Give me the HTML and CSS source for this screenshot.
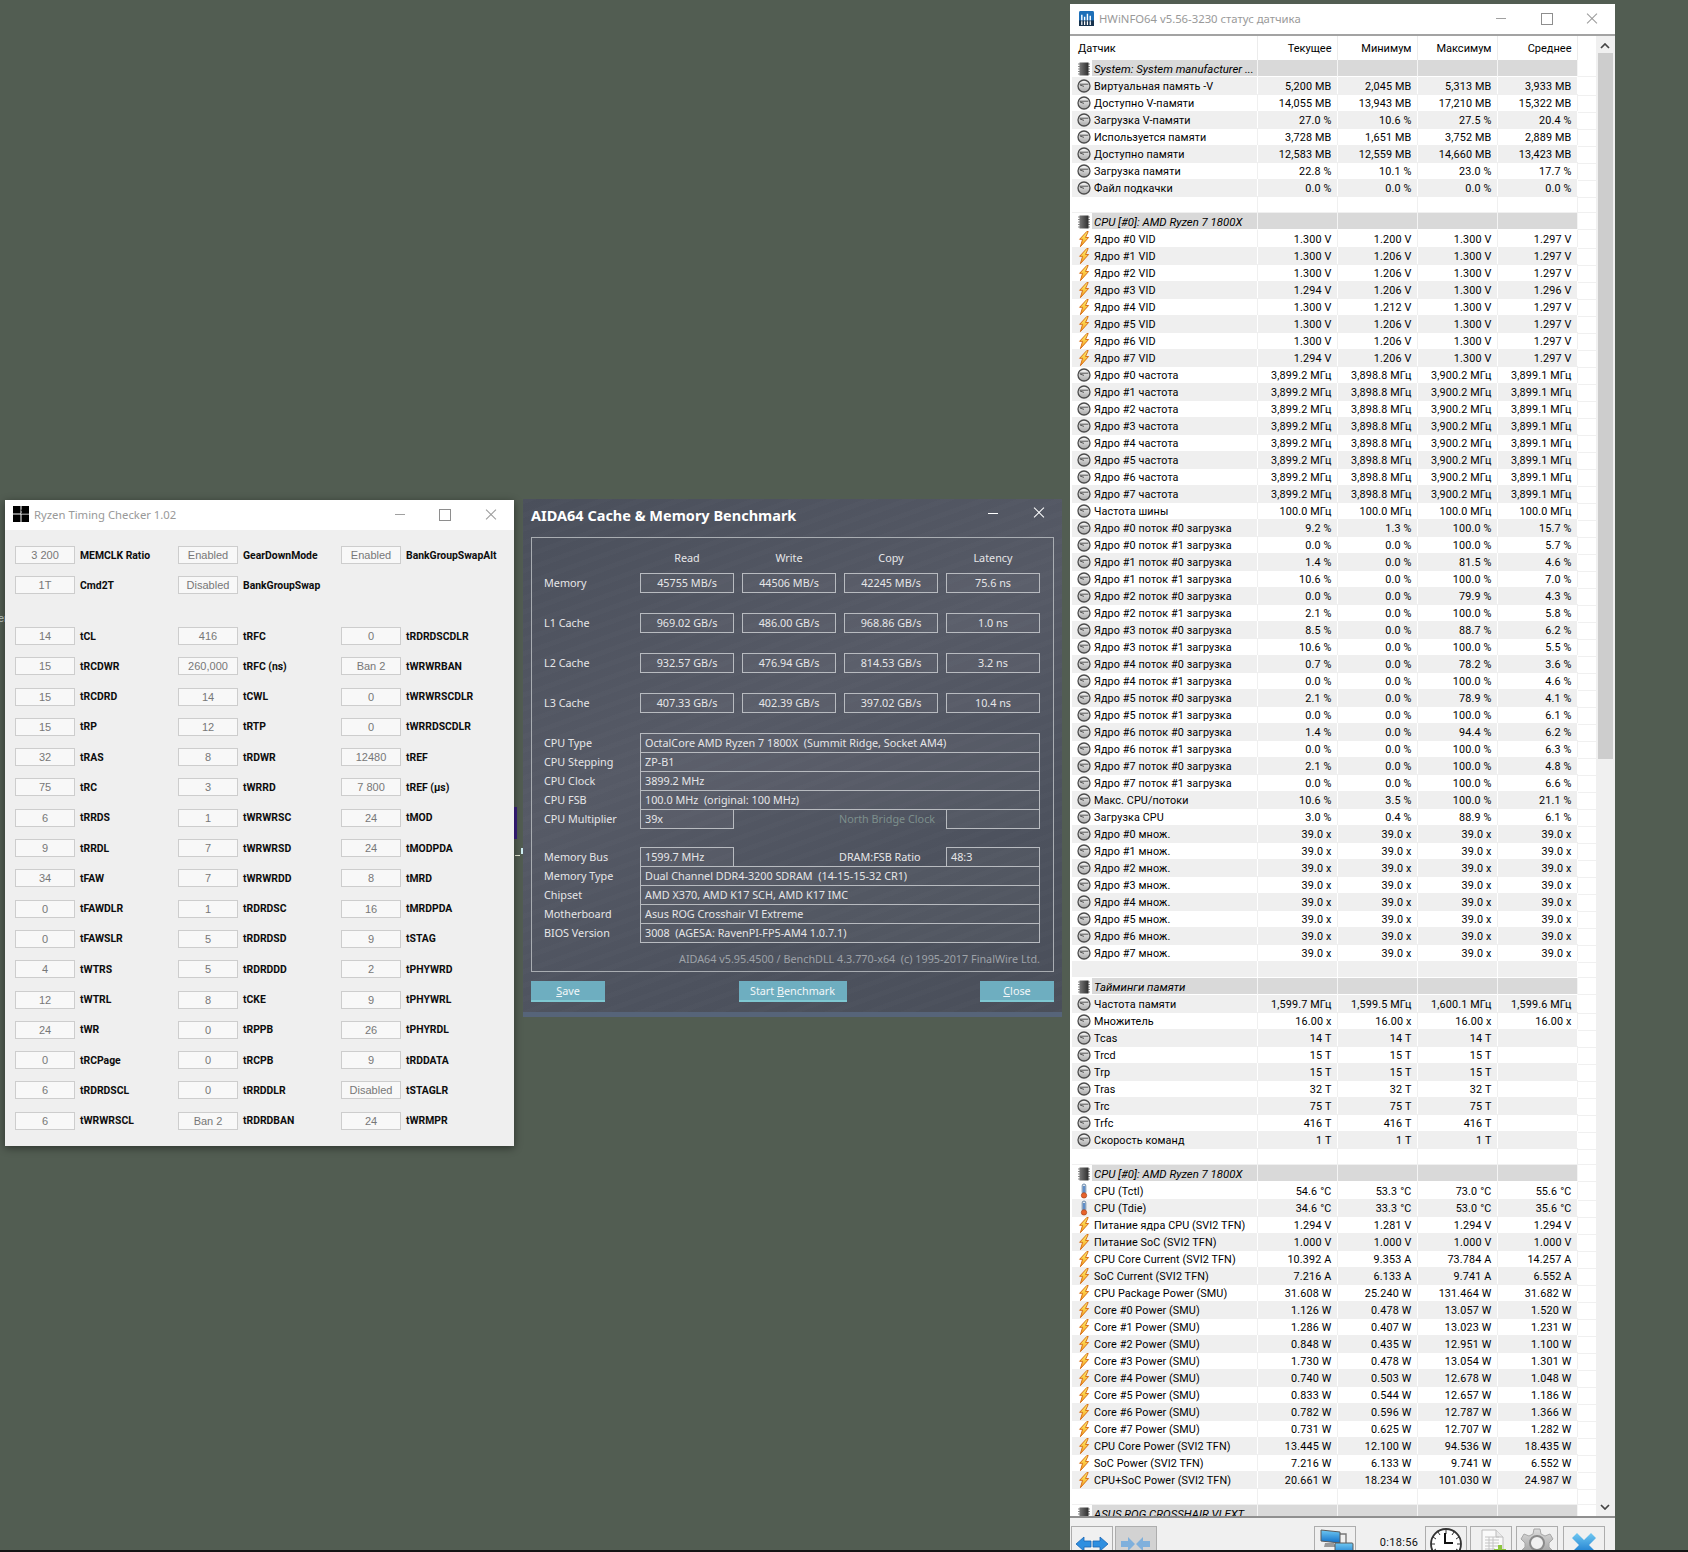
FILE: index.html
```html
<!DOCTYPE html>
<html lang="ru">
<head>
<meta charset="utf-8">
<title>Desktop</title>
<link rel="stylesheet" href="styles.css">
</head>
<body>
<svg class="sprite" width="0" height="0" aria-hidden="true">
<defs>
<linearGradient id="gc" x1="0" y1="0" x2="0" y2="1"><stop offset="0" stop-color="#fafafa"/><stop offset="1" stop-color="#a8a8a8"/></linearGradient>
<linearGradient id="gb" x1="0" y1="0" x2="0" y2="1"><stop offset="0" stop-color="#fff06a"/><stop offset="1" stop-color="#f4a21e"/></linearGradient>
<linearGradient id="gp" x1="0" y1="0" x2="1" y2="0"><stop offset="0" stop-color="#777"/><stop offset="1" stop-color="#2e2e2e"/></linearGradient>
<linearGradient id="gn" x1="0" y1="0" x2="0" y2="1"><stop offset="0" stop-color="#6fc8f2"/><stop offset="1" stop-color="#0f6fc8"/></linearGradient>
<linearGradient id="gs" x1="0" y1="0" x2="0" y2="1"><stop offset="0" stop-color="#dcdcdc"/><stop offset="1" stop-color="#8f8f8f"/></linearGradient>
<symbol id="c" viewBox="0 0 16 16"><circle cx="8" cy="8" r="6" fill="url(#gc)" stroke="#4c4c4c" stroke-width="1.3"/><path d="M3.6 6.200h8.800M8 8.400 3.900 7" fill="none" stroke="#555" stroke-width="1"/></symbol>
<symbol id="b" viewBox="0 0 16 16"><path d="M10.800.5 3.600 8.300h3L4.400 15.700l8.200-9.200H9.500l2.700-6z" fill="url(#gb)" stroke="#d8701a" stroke-width="1" stroke-linejoin="round"/></symbol>
<symbol id="p" viewBox="0 0 16 16"><path d="M2 3h2M2 5.500h2M2 8h2M2 10.500h2M2 13h2M12 3h2M12 5.500h2M12 8h2M12 10.500h2M12 13h2" stroke="#8a8a8a" stroke-width="1"/><rect x="3.500" y="1.500" width="9" height="13" fill="url(#gp)"/></symbol>
<symbol id="t" viewBox="0 0 16 16"><rect x="6.200" y="1" width="3.600" height="10" rx="1.800" fill="#dfe7ef" stroke="#5b7da0" stroke-width=".9"/><path d="M8 3v8" stroke="#3f78c0" stroke-width="1.600"/><circle cx="8" cy="12.400" r="2.700" fill="#e8622a" stroke="#a8481e" stroke-width=".7"/></symbol>
</defs>
</svg>

<span class="stray stray-text">er</span>
<span class="stray stray-purple"></span>
<span class="stray stray-dash"></span>
<span class="stray stray-tick"></span>

<section class="win rtc">
<header class="rtc-title">
<svg class="rtc-logo" viewBox="0 0 16 16"><path d="M0 0h7.500v7.500H0zM8.500 0H16v7.500H8.500zM0 8.500h7.500V16H0zM8.500 8.500H16V16H8.500z" fill="#000"/><path d="M7.500 4h2v1M8 7.500h8" stroke="#000" stroke-width=".5"/></svg>
<span class="rtc-name">Ryzen Timing Checker 1.02</span>
<span class="ctl ctl-min"></span><span class="ctl ctl-max"></span><span class="ctl ctl-close"></span>
</header>
<div class="rtc-top">
<div class="t"><span>3 200</span><b>MEMCLK Ratio</b></div><div class="t"><span>Enabled</span><b>GearDownMode</b></div><div class="t"><span>Enabled</span><b>BankGroupSwapAlt</b></div>
<div class="t"><span>1T</span><b>Cmd2T</b></div><div class="t"><span>Disabled</span><b>BankGroupSwap</b></div><div></div>
</div>
<div class="rtc-main">
<div class="t"><span>14</span><b>tCL</b></div><div class="t"><span>416</span><b>tRFC</b></div><div class="t"><span>0</span><b>tRDRDSCDLR</b></div>
<div class="t"><span>15</span><b>tRCDWR</b></div><div class="t"><span>260,000</span><b>tRFC (ns)</b></div><div class="t"><span>Ban 2</span><b>tWRWRBAN</b></div>
<div class="t"><span>15</span><b>tRCDRD</b></div><div class="t"><span>14</span><b>tCWL</b></div><div class="t"><span>0</span><b>tWRWRSCDLR</b></div>
<div class="t"><span>15</span><b>tRP</b></div><div class="t"><span>12</span><b>tRTP</b></div><div class="t"><span>0</span><b>tWRRDSCDLR</b></div>
<div class="t"><span>32</span><b>tRAS</b></div><div class="t"><span>8</span><b>tRDWR</b></div><div class="t"><span>12480</span><b>tREF</b></div>
<div class="t"><span>75</span><b>tRC</b></div><div class="t"><span>3</span><b>tWRRD</b></div><div class="t"><span>7 800</span><b>tREF (µs)</b></div>
<div class="t"><span>6</span><b>tRRDS</b></div><div class="t"><span>1</span><b>tWRWRSC</b></div><div class="t"><span>24</span><b>tMOD</b></div>
<div class="t"><span>9</span><b>tRRDL</b></div><div class="t"><span>7</span><b>tWRWRSD</b></div><div class="t"><span>24</span><b>tMODPDA</b></div>
<div class="t"><span>34</span><b>tFAW</b></div><div class="t"><span>7</span><b>tWRWRDD</b></div><div class="t"><span>8</span><b>tMRD</b></div>
<div class="t"><span>0</span><b>tFAWDLR</b></div><div class="t"><span>1</span><b>tRDRDSC</b></div><div class="t"><span>16</span><b>tMRDPDA</b></div>
<div class="t"><span>0</span><b>tFAWSLR</b></div><div class="t"><span>5</span><b>tRDRDSD</b></div><div class="t"><span>9</span><b>tSTAG</b></div>
<div class="t"><span>4</span><b>tWTRS</b></div><div class="t"><span>5</span><b>tRDRDDD</b></div><div class="t"><span>2</span><b>tPHYWRD</b></div>
<div class="t"><span>12</span><b>tWTRL</b></div><div class="t"><span>8</span><b>tCKE</b></div><div class="t"><span>9</span><b>tPHYWRL</b></div>
<div class="t"><span>24</span><b>tWR</b></div><div class="t"><span>0</span><b>tRPPB</b></div><div class="t"><span>26</span><b>tPHYRDL</b></div>
<div class="t"><span>0</span><b>tRCPage</b></div><div class="t"><span>0</span><b>tRCPB</b></div><div class="t"><span>9</span><b>tRDDATA</b></div>
<div class="t"><span>6</span><b>tRDRDSCL</b></div><div class="t"><span>0</span><b>tRRDDLR</b></div><div class="t"><span>Disabled</span><b>tSTAGLR</b></div>
<div class="t"><span>6</span><b>tWRWRSCL</b></div><div class="t"><span>Ban 2</span><b>tRDRDBAN</b></div><div class="t"><span>24</span><b>tWRMPR</b></div>
</div>
</section>

<section class="win aida">
<header class="aida-title">
<h1>AIDA64 Cache &amp; Memory Benchmark</h1>
<span class="actl actl-min"></span><span class="actl actl-close"></span>
</header>
<div class="aida-frame">
<div class="bench bench-head"><span></span><span>Read</span><span>Write</span><span>Copy</span><span>Latency</span></div>
<div class="bench"><label>Memory</label><output>45755 MB/s</output><output>44506 MB/s</output><output>42245 MB/s</output><output>75.6 ns</output></div>
<div class="bench"><label>L1 Cache</label><output>969.02 GB/s</output><output>486.00 GB/s</output><output>968.86 GB/s</output><output>1.0 ns</output></div>
<div class="bench"><label>L2 Cache</label><output>932.57 GB/s</output><output>476.94 GB/s</output><output>814.53 GB/s</output><output>3.2 ns</output></div>
<div class="bench"><label>L3 Cache</label><output>407.33 GB/s</output><output>402.39 GB/s</output><output>397.02 GB/s</output><output>10.4 ns</output></div>
<div class="info">
<div class="irow"><label>CPU Type</label><div class="f wide">OctalCore AMD Ryzen 7 1800X  (Summit Ridge, Socket AM4)</div></div>
<div class="irow"><label>CPU Stepping</label><div class="f wide">ZP-B1</div></div>
<div class="irow"><label>CPU Clock</label><div class="f wide">3899.2 MHz</div></div>
<div class="irow"><label>CPU FSB</label><div class="f wide">100.0 MHz  (original: 100 MHz)</div></div>
<div class="irow"><label>CPU Multiplier</label><div class="f">39x</div><span class="mid mid-off">North Bridge Clock</span><div class="f"></div></div>
</div>
<div class="info info-b">
<div class="irow"><label>Memory Bus</label><div class="f">1599.7 MHz</div><span class="mid">DRAM:FSB Ratio</span><div class="f">48:3</div></div>
<div class="irow"><label>Memory Type</label><div class="f wide">Dual Channel DDR4-3200 SDRAM  (14-15-15-32 CR1)</div></div>
<div class="irow"><label>Chipset</label><div class="f wide">AMD X370, AMD K17 SCH, AMD K17 IMC</div></div>
<div class="irow"><label>Motherboard</label><div class="f wide">Asus ROG Crosshair VI Extreme</div></div>
<div class="irow"><label>BIOS Version</label><div class="f wide">3008  (AGESA: RavenPI-FP5-AM4 1.0.7.1)</div></div>
</div>
<p class="aida-foot">AIDA64 v5.95.4500 / BenchDLL 4.3.770-x64  (c) 1995-2017 FinalWire Ltd.</p>
</div>
<div class="aida-btns">
<button class="btn btn-side"><u>S</u>ave</button>
<button class="btn btn-start">Start <u>B</u>enchmark</button>
<button class="btn btn-side"><u>C</u>lose</button>
</div>
<div class="aida-band"></div>
</section>

<section class="win hw">
<header class="hw-title">
<svg class="hw-logo" viewBox="0 0 16 16"><rect width="16" height="16" rx="1.500" fill="#1d6fb8"/><rect y="10" width="16" height="6" fill="#17324d"/><path d="M3 4v6M6 6v4M9 3v7M12 5v5" stroke="#fff" stroke-width="1.500"/><path d="M3 11v4M6 11v4M9 11v4M12 11v4" stroke="#fff" stroke-width="1.300"/></svg>
<span class="hw-name">HWiNFO64 v5.56-3230 статус датчика</span>
<span class="ctl ctl-min"></span><span class="ctl ctl-max"></span><span class="ctl ctl-close"></span>
</header>
<div class="hw-main">
<div class="list">
<div class="list-head"><span>Датчик</span><span>Текущее</span><span>Минимум</span><span>Максимум</span><span>Среднее</span></div>
<div class="rows">
<div class="row grp"><span><svg class="ic"><use href="#p"/></svg><em>System: System manufacturer ...</em></span><span></span><span></span><span></span><span></span></div>
<div class="row"><span><svg class="ic"><use href="#c"/></svg>Виртуальная память -V</span><span>5,200 MB</span><span>2,045 MB</span><span>5,313 MB</span><span>3,933 MB</span></div>
<div class="row"><span><svg class="ic"><use href="#c"/></svg>Доступно V-памяти</span><span>14,055 MB</span><span>13,943 MB</span><span>17,210 MB</span><span>15,322 MB</span></div>
<div class="row"><span><svg class="ic"><use href="#c"/></svg>Загрузка V-памяти</span><span>27.0 %</span><span>10.6 %</span><span>27.5 %</span><span>20.4 %</span></div>
<div class="row"><span><svg class="ic"><use href="#c"/></svg>Используется памяти</span><span>3,728 MB</span><span>1,651 MB</span><span>3,752 MB</span><span>2,889 MB</span></div>
<div class="row"><span><svg class="ic"><use href="#c"/></svg>Доступно памяти</span><span>12,583 MB</span><span>12,559 MB</span><span>14,660 MB</span><span>13,423 MB</span></div>
<div class="row"><span><svg class="ic"><use href="#c"/></svg>Загрузка памяти</span><span>22.8 %</span><span>10.1 %</span><span>23.0 %</span><span>17.7 %</span></div>
<div class="row"><span><svg class="ic"><use href="#c"/></svg>Файл подкачки</span><span>0.0 %</span><span>0.0 %</span><span>0.0 %</span><span>0.0 %</span></div>
<div class="row"><span></span><span></span><span></span><span></span><span></span></div>
<div class="row grp"><span><svg class="ic"><use href="#p"/></svg><em>CPU [#0]: AMD Ryzen 7 1800X</em></span><span></span><span></span><span></span><span></span></div>
<div class="row"><span><svg class="ic"><use href="#b"/></svg>Ядро #0 VID</span><span>1.300 V</span><span>1.200 V</span><span>1.300 V</span><span>1.297 V</span></div>
<div class="row"><span><svg class="ic"><use href="#b"/></svg>Ядро #1 VID</span><span>1.300 V</span><span>1.206 V</span><span>1.300 V</span><span>1.297 V</span></div>
<div class="row"><span><svg class="ic"><use href="#b"/></svg>Ядро #2 VID</span><span>1.300 V</span><span>1.206 V</span><span>1.300 V</span><span>1.297 V</span></div>
<div class="row"><span><svg class="ic"><use href="#b"/></svg>Ядро #3 VID</span><span>1.294 V</span><span>1.206 V</span><span>1.300 V</span><span>1.296 V</span></div>
<div class="row"><span><svg class="ic"><use href="#b"/></svg>Ядро #4 VID</span><span>1.300 V</span><span>1.212 V</span><span>1.300 V</span><span>1.297 V</span></div>
<div class="row"><span><svg class="ic"><use href="#b"/></svg>Ядро #5 VID</span><span>1.300 V</span><span>1.206 V</span><span>1.300 V</span><span>1.297 V</span></div>
<div class="row"><span><svg class="ic"><use href="#b"/></svg>Ядро #6 VID</span><span>1.300 V</span><span>1.206 V</span><span>1.300 V</span><span>1.297 V</span></div>
<div class="row"><span><svg class="ic"><use href="#b"/></svg>Ядро #7 VID</span><span>1.294 V</span><span>1.206 V</span><span>1.300 V</span><span>1.297 V</span></div>
<div class="row"><span><svg class="ic"><use href="#c"/></svg>Ядро #0 частота</span><span>3,899.2 МГц</span><span>3,898.8 МГц</span><span>3,900.2 МГц</span><span>3,899.1 МГц</span></div>
<div class="row"><span><svg class="ic"><use href="#c"/></svg>Ядро #1 частота</span><span>3,899.2 МГц</span><span>3,898.8 МГц</span><span>3,900.2 МГц</span><span>3,899.1 МГц</span></div>
<div class="row"><span><svg class="ic"><use href="#c"/></svg>Ядро #2 частота</span><span>3,899.2 МГц</span><span>3,898.8 МГц</span><span>3,900.2 МГц</span><span>3,899.1 МГц</span></div>
<div class="row"><span><svg class="ic"><use href="#c"/></svg>Ядро #3 частота</span><span>3,899.2 МГц</span><span>3,898.8 МГц</span><span>3,900.2 МГц</span><span>3,899.1 МГц</span></div>
<div class="row"><span><svg class="ic"><use href="#c"/></svg>Ядро #4 частота</span><span>3,899.2 МГц</span><span>3,898.8 МГц</span><span>3,900.2 МГц</span><span>3,899.1 МГц</span></div>
<div class="row"><span><svg class="ic"><use href="#c"/></svg>Ядро #5 частота</span><span>3,899.2 МГц</span><span>3,898.8 МГц</span><span>3,900.2 МГц</span><span>3,899.1 МГц</span></div>
<div class="row"><span><svg class="ic"><use href="#c"/></svg>Ядро #6 частота</span><span>3,899.2 МГц</span><span>3,898.8 МГц</span><span>3,900.2 МГц</span><span>3,899.1 МГц</span></div>
<div class="row"><span><svg class="ic"><use href="#c"/></svg>Ядро #7 частота</span><span>3,899.2 МГц</span><span>3,898.8 МГц</span><span>3,900.2 МГц</span><span>3,899.1 МГц</span></div>
<div class="row"><span><svg class="ic"><use href="#c"/></svg>Частота шины</span><span>100.0 МГц</span><span>100.0 МГц</span><span>100.0 МГц</span><span>100.0 МГц</span></div>
<div class="row"><span><svg class="ic"><use href="#c"/></svg>Ядро #0 поток #0 загрузка</span><span>9.2 %</span><span>1.3 %</span><span>100.0 %</span><span>15.7 %</span></div>
<div class="row"><span><svg class="ic"><use href="#c"/></svg>Ядро #0 поток #1 загрузка</span><span>0.0 %</span><span>0.0 %</span><span>100.0 %</span><span>5.7 %</span></div>
<div class="row"><span><svg class="ic"><use href="#c"/></svg>Ядро #1 поток #0 загрузка</span><span>1.4 %</span><span>0.0 %</span><span>81.5 %</span><span>4.6 %</span></div>
<div class="row"><span><svg class="ic"><use href="#c"/></svg>Ядро #1 поток #1 загрузка</span><span>10.6 %</span><span>0.0 %</span><span>100.0 %</span><span>7.0 %</span></div>
<div class="row"><span><svg class="ic"><use href="#c"/></svg>Ядро #2 поток #0 загрузка</span><span>0.0 %</span><span>0.0 %</span><span>79.9 %</span><span>4.3 %</span></div>
<div class="row"><span><svg class="ic"><use href="#c"/></svg>Ядро #2 поток #1 загрузка</span><span>2.1 %</span><span>0.0 %</span><span>100.0 %</span><span>5.8 %</span></div>
<div class="row"><span><svg class="ic"><use href="#c"/></svg>Ядро #3 поток #0 загрузка</span><span>8.5 %</span><span>0.0 %</span><span>88.7 %</span><span>6.2 %</span></div>
<div class="row"><span><svg class="ic"><use href="#c"/></svg>Ядро #3 поток #1 загрузка</span><span>10.6 %</span><span>0.0 %</span><span>100.0 %</span><span>5.5 %</span></div>
<div class="row"><span><svg class="ic"><use href="#c"/></svg>Ядро #4 поток #0 загрузка</span><span>0.7 %</span><span>0.0 %</span><span>78.2 %</span><span>3.6 %</span></div>
<div class="row"><span><svg class="ic"><use href="#c"/></svg>Ядро #4 поток #1 загрузка</span><span>0.0 %</span><span>0.0 %</span><span>100.0 %</span><span>4.6 %</span></div>
<div class="row"><span><svg class="ic"><use href="#c"/></svg>Ядро #5 поток #0 загрузка</span><span>2.1 %</span><span>0.0 %</span><span>78.9 %</span><span>4.1 %</span></div>
<div class="row"><span><svg class="ic"><use href="#c"/></svg>Ядро #5 поток #1 загрузка</span><span>0.0 %</span><span>0.0 %</span><span>100.0 %</span><span>6.1 %</span></div>
<div class="row"><span><svg class="ic"><use href="#c"/></svg>Ядро #6 поток #0 загрузка</span><span>1.4 %</span><span>0.0 %</span><span>94.4 %</span><span>6.2 %</span></div>
<div class="row"><span><svg class="ic"><use href="#c"/></svg>Ядро #6 поток #1 загрузка</span><span>0.0 %</span><span>0.0 %</span><span>100.0 %</span><span>6.3 %</span></div>
<div class="row"><span><svg class="ic"><use href="#c"/></svg>Ядро #7 поток #0 загрузка</span><span>2.1 %</span><span>0.0 %</span><span>100.0 %</span><span>4.8 %</span></div>
<div class="row"><span><svg class="ic"><use href="#c"/></svg>Ядро #7 поток #1 загрузка</span><span>0.0 %</span><span>0.0 %</span><span>100.0 %</span><span>6.6 %</span></div>
<div class="row"><span><svg class="ic"><use href="#c"/></svg>Макс. CPU/потоки</span><span>10.6 %</span><span>3.5 %</span><span>100.0 %</span><span>21.1 %</span></div>
<div class="row"><span><svg class="ic"><use href="#c"/></svg>Загрузка CPU</span><span>3.0 %</span><span>0.4 %</span><span>88.9 %</span><span>6.1 %</span></div>
<div class="row"><span><svg class="ic"><use href="#c"/></svg>Ядро #0 множ.</span><span>39.0 x</span><span>39.0 x</span><span>39.0 x</span><span>39.0 x</span></div>
<div class="row"><span><svg class="ic"><use href="#c"/></svg>Ядро #1 множ.</span><span>39.0 x</span><span>39.0 x</span><span>39.0 x</span><span>39.0 x</span></div>
<div class="row"><span><svg class="ic"><use href="#c"/></svg>Ядро #2 множ.</span><span>39.0 x</span><span>39.0 x</span><span>39.0 x</span><span>39.0 x</span></div>
<div class="row"><span><svg class="ic"><use href="#c"/></svg>Ядро #3 множ.</span><span>39.0 x</span><span>39.0 x</span><span>39.0 x</span><span>39.0 x</span></div>
<div class="row"><span><svg class="ic"><use href="#c"/></svg>Ядро #4 множ.</span><span>39.0 x</span><span>39.0 x</span><span>39.0 x</span><span>39.0 x</span></div>
<div class="row"><span><svg class="ic"><use href="#c"/></svg>Ядро #5 множ.</span><span>39.0 x</span><span>39.0 x</span><span>39.0 x</span><span>39.0 x</span></div>
<div class="row"><span><svg class="ic"><use href="#c"/></svg>Ядро #6 множ.</span><span>39.0 x</span><span>39.0 x</span><span>39.0 x</span><span>39.0 x</span></div>
<div class="row"><span><svg class="ic"><use href="#c"/></svg>Ядро #7 множ.</span><span>39.0 x</span><span>39.0 x</span><span>39.0 x</span><span>39.0 x</span></div>
<div class="row"><span></span><span></span><span></span><span></span><span></span></div>
<div class="row grp"><span><svg class="ic"><use href="#p"/></svg><em>Тайминги памяти</em></span><span></span><span></span><span></span><span></span></div>
<div class="row"><span><svg class="ic"><use href="#c"/></svg>Частота памяти</span><span>1,599.7 МГц</span><span>1,599.5 МГц</span><span>1,600.1 МГц</span><span>1,599.6 МГц</span></div>
<div class="row"><span><svg class="ic"><use href="#c"/></svg>Множитель</span><span>16.00 x</span><span>16.00 x</span><span>16.00 x</span><span>16.00 x</span></div>
<div class="row"><span><svg class="ic"><use href="#c"/></svg>Tcas</span><span>14 T</span><span>14 T</span><span>14 T</span><span></span></div>
<div class="row"><span><svg class="ic"><use href="#c"/></svg>Trcd</span><span>15 T</span><span>15 T</span><span>15 T</span><span></span></div>
<div class="row"><span><svg class="ic"><use href="#c"/></svg>Trp</span><span>15 T</span><span>15 T</span><span>15 T</span><span></span></div>
<div class="row"><span><svg class="ic"><use href="#c"/></svg>Tras</span><span>32 T</span><span>32 T</span><span>32 T</span><span></span></div>
<div class="row"><span><svg class="ic"><use href="#c"/></svg>Trc</span><span>75 T</span><span>75 T</span><span>75 T</span><span></span></div>
<div class="row"><span><svg class="ic"><use href="#c"/></svg>Trfc</span><span>416 T</span><span>416 T</span><span>416 T</span><span></span></div>
<div class="row"><span><svg class="ic"><use href="#c"/></svg>Скорость команд</span><span>1 T</span><span>1 T</span><span>1 T</span><span></span></div>
<div class="row"><span></span><span></span><span></span><span></span><span></span></div>
<div class="row grp"><span><svg class="ic"><use href="#p"/></svg><em>CPU [#0]: AMD Ryzen 7 1800X</em></span><span></span><span></span><span></span><span></span></div>
<div class="row"><span><svg class="ic"><use href="#t"/></svg>CPU (Tctl)</span><span>54.6 °C</span><span>53.3 °C</span><span>73.0 °C</span><span>55.6 °C</span></div>
<div class="row"><span><svg class="ic"><use href="#t"/></svg>CPU (Tdie)</span><span>34.6 °C</span><span>33.3 °C</span><span>53.0 °C</span><span>35.6 °C</span></div>
<div class="row"><span><svg class="ic"><use href="#b"/></svg>Питание ядра CPU (SVI2 TFN)</span><span>1.294 V</span><span>1.281 V</span><span>1.294 V</span><span>1.294 V</span></div>
<div class="row"><span><svg class="ic"><use href="#b"/></svg>Питание SoC (SVI2 TFN)</span><span>1.000 V</span><span>1.000 V</span><span>1.000 V</span><span>1.000 V</span></div>
<div class="row"><span><svg class="ic"><use href="#b"/></svg>CPU Core Current (SVI2 TFN)</span><span>10.392 A</span><span>9.353 A</span><span>73.784 A</span><span>14.257 A</span></div>
<div class="row"><span><svg class="ic"><use href="#b"/></svg>SoC Current (SVI2 TFN)</span><span>7.216 A</span><span>6.133 A</span><span>9.741 A</span><span>6.552 A</span></div>
<div class="row"><span><svg class="ic"><use href="#b"/></svg>CPU Package Power (SMU)</span><span>31.608 W</span><span>25.240 W</span><span>131.464 W</span><span>31.682 W</span></div>
<div class="row"><span><svg class="ic"><use href="#b"/></svg>Core #0 Power (SMU)</span><span>1.126 W</span><span>0.478 W</span><span>13.057 W</span><span>1.520 W</span></div>
<div class="row"><span><svg class="ic"><use href="#b"/></svg>Core #1 Power (SMU)</span><span>1.286 W</span><span>0.407 W</span><span>13.023 W</span><span>1.231 W</span></div>
<div class="row"><span><svg class="ic"><use href="#b"/></svg>Core #2 Power (SMU)</span><span>0.848 W</span><span>0.435 W</span><span>12.951 W</span><span>1.100 W</span></div>
<div class="row"><span><svg class="ic"><use href="#b"/></svg>Core #3 Power (SMU)</span><span>1.730 W</span><span>0.478 W</span><span>13.054 W</span><span>1.301 W</span></div>
<div class="row"><span><svg class="ic"><use href="#b"/></svg>Core #4 Power (SMU)</span><span>0.740 W</span><span>0.503 W</span><span>12.678 W</span><span>1.048 W</span></div>
<div class="row"><span><svg class="ic"><use href="#b"/></svg>Core #5 Power (SMU)</span><span>0.833 W</span><span>0.544 W</span><span>12.657 W</span><span>1.186 W</span></div>
<div class="row"><span><svg class="ic"><use href="#b"/></svg>Core #6 Power (SMU)</span><span>0.782 W</span><span>0.596 W</span><span>12.787 W</span><span>1.366 W</span></div>
<div class="row"><span><svg class="ic"><use href="#b"/></svg>Core #7 Power (SMU)</span><span>0.731 W</span><span>0.625 W</span><span>12.707 W</span><span>1.282 W</span></div>
<div class="row"><span><svg class="ic"><use href="#b"/></svg>CPU Core Power (SVI2 TFN)</span><span>13.445 W</span><span>12.100 W</span><span>94.536 W</span><span>18.435 W</span></div>
<div class="row"><span><svg class="ic"><use href="#b"/></svg>SoC Power (SVI2 TFN)</span><span>7.216 W</span><span>6.133 W</span><span>9.741 W</span><span>6.552 W</span></div>
<div class="row"><span><svg class="ic"><use href="#b"/></svg>CPU+SoC Power (SVI2 TFN)</span><span>20.661 W</span><span>18.234 W</span><span>101.030 W</span><span>24.987 W</span></div>
<div class="row"><span></span><span></span><span></span><span></span><span></span></div>
<div class="row grp"><span><svg class="ic"><use href="#p"/></svg><em>ASUS ROG CROSSHAIR VI EXT…</em></span><span></span><span></span><span></span><span></span></div>
</div>
</div>
<div class="scroll">
<svg class="arrow" viewBox="0 0 10 6"><path d="M1 5l4-4 4 4" fill="none" stroke="#444" stroke-width="1.700"/></svg>
<div class="thumb"></div>
<svg class="arrow arrow-down" viewBox="0 0 10 6"><path d="M1 1l4 4 4-4" fill="none" stroke="#444" stroke-width="1.700"/></svg>
</div>
</div>
<footer class="tools">
<div class="tool"><svg viewBox="0 0 38 30"><path d="M3 15l8-7v4h7v6h-7v4zM35 15l-8-7v4h-7v6h7v4z" fill="#2f8fe0" stroke="#1a66b4" stroke-width=".8"/></svg></div>
<div class="tool tool-off"><svg viewBox="0 0 38 30"><path d="M4 12h7V8l7 7-7 7v-4H4zM33 12h-7V8l-7 7 7 7v-4h7z" fill="#7fb0dc"/></svg></div>
<div class="tool tool-net"><svg viewBox="0 0 38 30"><path d="M20 5h10v9" fill="none" stroke="#777" stroke-width="1.400"/><path d="M5 1l19 2v11L5 12z" fill="url(#gn)" stroke="#5a5a5a"/><path d="M9 14h9l2 4H8z" fill="#9a9a9a"/><rect x="19" y="14" width="18" height="13" rx="1" fill="url(#gn)" stroke="#5a5a5a"/></svg></div>
<span class="uptime">0:18:56</span>
<div class="tool tool-clock"><svg viewBox="0 0 38 30"><circle cx="19" cy="15" r="15" fill="#fff" stroke="#333" stroke-width="1.800"/><path d="M19 1v4M4 15h4M30 15h4M11 3l2 3M27 3l-2 3M6 8l3 2M32 8l-3 2M6 22l3-2M32 22l-3-2" stroke="#333"/><path d="M18 4v10h8" fill="none" stroke="#111" stroke-width="2"/></svg></div>
<div class="tool tool-doc"><svg viewBox="0 0 38 30"><path d="M10 1h14l7 7v24H10z" fill="#fafafa" stroke="#bcbcbc"/><path d="M24 1v7h7" fill="#e8e8e8" stroke="#bcbcbc"/><path d="M13 8h14M13 11h14M13 14h14M13 17h14M13 20h10M17 8v14M21 8v14" stroke="#c4c4c4"/><path d="M25 19h4v-4h4v4h4v4h-4v4h-4v-4h-4z" fill="#8ec63f" transform="translate(-3 1)"/></svg></div>
<div class="tool tool-gear"><svg viewBox="0 0 38 30"><path d="M16 0h6l1 5 4 2 5-2 3 5-4 4v4l4 4-3 5-5-2-4 2-1 5h-6l-1-5-4-2-5 2-3-5 4-4v-4L3 10l3-5 5 2 4-2z" fill="url(#gs)" stroke="#a8a8a8"/><circle cx="19" cy="14" r="7" fill="#f0f0f0" stroke="#8a8a8a" stroke-width="2"/></svg></div>
<div class="tool"><svg viewBox="0 0 38 30"><path d="M12 4l7 7 7-7 5 5-7 7 7 7-5 5-7-7-7 7-5-5 7-7-7-7z" fill="url(#gn)"/></svg></div>
</footer>
</section>
<div class="taskbar"></div>
</body>
</html>
```
FILE: styles.css
```css
* { box-sizing: border-box; }
html, body { margin: 0; height: 1552px; overflow: hidden; }
body { position: relative; background: #525d52; font-family: "Roboto", "Liberation Sans", sans-serif; }
.sprite { position: absolute; }

.stray { position: absolute; }
.stray-text { left: -2px; top: 612px; font: 11px "Liberation Sans", sans-serif; color: #c8d0c8; }
.stray-purple { left: 514px; top: 807px; width: 3px; height: 32px; background: #3a1f80; }
.stray-dash { left: 515px; top: 855px; width: 5px; height: 1px; background: #e8ecd8; }
.stray-tick { left: 521px; top: 848px; width: 2px; height: 6px; background: #d0f0f4; }

.win { position: absolute; }
.taskbar { position: absolute; left: 0; right: 0; top: 1550px; height: 2px; background: #141414; }

/* Window captions shared */
.ctl { position: absolute; top: 0; width: 14px; height: 100%; }
.ctl-min::before { content: ""; position: absolute; left: 2px; right: 2px; top: 14px; height: 1px; background: #a0a0a0; }
.ctl-max::before { content: ""; position: absolute; left: 2px; top: 9px; width: 10px; height: 10px; border: 1px solid #8e8e8e; }
.ctl-close::before, .ctl-close::after { content: ""; position: absolute; left: 0; top: 14px; width: 14px; height: 1px; background: #9a9a9a; transform: rotate(45deg); }
.ctl-close::after { transform: rotate(-45deg); }

/* Ryzen Timing Checker */
.rtc { left: 5px; top: 500px; width: 509px; height: 646px; background: #efefef; box-shadow: 0 2px 8px rgba(0,0,0,.45); }
.rtc-title { position: relative; height: 30px; padding: 0 0 2px 8px; background: #fff; display: flex; align-items: center; gap: 5px; }
.rtc-logo { width: 16px; height: 16px; }
.rtc-name { font: 11.300px "Noto Sans", sans-serif; color: #999; }
.rtc .ctl-min { left: 388px; }
.rtc .ctl-max { left: 432px; }
.rtc .ctl-close { left: 479px; }
.rtc-top, .rtc-main { display: grid; grid-template-columns: repeat(3, 163px); padding-left: 10px; }
.rtc-top { margin-top: 16px; grid-auto-rows: 18px; row-gap: 12px; }
.rtc-main { margin-top: 33px; grid-auto-rows: 18px; row-gap: 12.3px; }
.t { display: flex; align-items: center; gap: 5px; }
.t span { flex: 0 0 60px; height: 18px; background: #f8f8f8; border: 1px solid #cdcdcd; text-align: center; font: 11px/16px "Liberation Sans", sans-serif; color: #777; }
.t b { font: bold 10.400px "Roboto", sans-serif; color: #0d0d0d; white-space: nowrap; }

/* AIDA64 */
.aida { left: 523px; top: 499px; width: 539px; height: 518px; padding: 0 8px; background: repeating-linear-gradient(160deg, rgba(255,255,255,.012) 0 5px, transparent 5px 13px), linear-gradient(155deg, #4a4f5b 0%, #565a66 42%, #4d525e 72%, #4a4f5a 100%); color: #e6e6e8; font: 10.800px "Noto Sans", sans-serif; }
.aida-title { position: relative; height: 38px; }
.aida-title h1 { margin: 0; padding-top: 6px; font: bold 14.500px/20px "Noto Sans", sans-serif; color: #fff; }
.actl { position: absolute; top: 0; width: 12px; height: 24px; }
.actl-min { left: 456px; }
.actl-min::before { content: ""; position: absolute; left: 1px; right: 1px; top: 14px; height: 1px; background: #fff; }
.actl-close { left: 502px; }
.actl-close::before, .actl-close::after { content: ""; position: absolute; left: -1px; top: 13px; width: 14px; height: 1px; background: #fff; transform: rotate(45deg); }
.actl-close::after { transform: rotate(-45deg); }
.aida-frame { height: 435px; border: 1px solid #a9adb2; padding: 11px 12px 0 12px; }
.bench { display: grid; grid-template-columns: 88px repeat(4, 94px); column-gap: 8px; height: 20px; margin-bottom: 20px; align-items: center; }
.bench-head { height: 16px; margin-bottom: 8px; text-align: center; }
.bench label, .irow label, .mid { padding-bottom: 2px; white-space: nowrap; }
.bench output { display: block; height: 20px; border: 1px solid #b8bbc0; text-align: center; line-height: 18px; background: rgba(255,255,255,.035); }
.irow { display: flex; align-items: center; height: 20px; margin-bottom: -1px; }
.irow label { flex: 0 0 96px; }
.f { flex: 0 0 94px; height: 20px; border: 1px solid #b8bbc0; padding-left: 4px; line-height: 18px; white-space: pre; background: rgba(255,255,255,.035); }
.f.wide { flex-basis: 400px; }
.mid { flex: 0 0 212px; padding-left: 105px; }
.mid-off { color: #7d8f8c; }
.info-b { margin-top: 19px; }
.aida-foot { margin: 9px 0 0; height: 16px; line-height: 16px; width: 496px; text-align: right; color: #9ea2a8; white-space: pre; }
.aida-btns { display: flex; justify-content: space-between; margin-top: 9px; }
.btn { height: 21px; padding: 0; border: 0; border-bottom: 2px solid #7fc8d2; background: #6eaec0; color: #f2f6f8; font: 10.800px "Noto Sans", sans-serif; }
.btn-side { width: 74px; }
.btn-start { width: 108px; }
.aida-band { position: absolute; left: 0; right: 0; bottom: 0; height: 5px; background: #566479; }

/* HWiNFO */
.hw { left: 1070px; top: 4px; width: 545px; height: 1546px; background: #f0f0f0; color: #000; font: 10.800px "Roboto", sans-serif; }
.hw-title { position: relative; height: 30px; padding: 0 0 2px 9px; background: #fff; display: flex; align-items: center; gap: 5px; }
.hw-logo { width: 15px; height: 15px; }
.hw-name { font: 11.300px "Noto Sans", sans-serif; color: #999; }
.hw .ctl-min { left: 424px; }
.hw .ctl-max { left: 469px; }
.hw .ctl-close { left: 515px; }
.hw-main { display: flex; height: 1484px; border-top: 2px solid #a3a3a3; border-bottom: 2px solid #8f8f8f; background: #fff; }
.list { width: 526px; padding-left: 2px; overflow: hidden; }
.list-head, .row { display: grid; grid-template-columns: 186px repeat(4, 80px) 18px; }
.list-head { height: 24px; }
.list-head span { padding-right: 5.500px; border-right: 1px solid #ececec; line-height: 26px; text-align: right; font-size: 11px; }
.list-head span:first-child { padding-left: 6px; text-align: left; }
.row { height: 17px; }
.row > span { padding: 1px 5.500px 0 0; border-right: 1px solid #f0f0f0; border-bottom: 1px solid #f0f0f0; line-height: 17px; text-align: right; white-space: nowrap; letter-spacing: .15px; }
.row > span:first-child { display: flex; align-items: flex-start; text-align: left; overflow: hidden; letter-spacing: .1px; }
.row::after { content: ""; border-bottom: 1px solid #f0f0f0; }
.row:nth-child(even) > span { background: #efefef; border-color: #fff; }
.row.grp > span { background: #d9d9d9; border-right-color: #f4f4f4; border-bottom-color: #fff; }
.row.grp > span:first-child { background: linear-gradient(90deg, #fff 20px, #d9d9d9 20px); }
.row em { font-style: italic; font-size: 11.400px; letter-spacing: 0; }
.ic { flex: 0 0 16px; width: 16px; height: 16px; margin: 0 2px 0 4px; }
.scroll { position: relative; width: 19px; background: #f0f0f0; padding-top: 17px; }
.arrow { position: absolute; left: 4px; top: 7px; width: 10px; height: 6px; }
.arrow-down { top: auto; bottom: 6px; }
.thumb { width: 15px; height: 706px; margin-left: 2px; background: #cdcdcd; }
.tools { display: flex; align-items: flex-start; height: 32px; padding: 8px 0 0 1px; overflow: hidden; position: relative; }
.tool { flex: 0 0 42px; height: 38px; border: 1px solid #adadad; background: #f0f0f0; margin-right: 2px; padding: 2px 0 0 1px; }
.tool svg { display: block; width: 38px; height: 30px; overflow: visible; }
.tool-off { background: #d2d2d2; }
.tool-net { margin-left: 155px; }
.tool-clock { margin-right: 3px; }
.tool-doc { margin-right: 4px; }
.tool-gear { margin-right: 5px; }
.uptime { flex: 0 0 67px; padding: 1px 0 0 15px; text-align: center; font: 11px/32px "Roboto", sans-serif; letter-spacing: .3px; color: #111; }
```
